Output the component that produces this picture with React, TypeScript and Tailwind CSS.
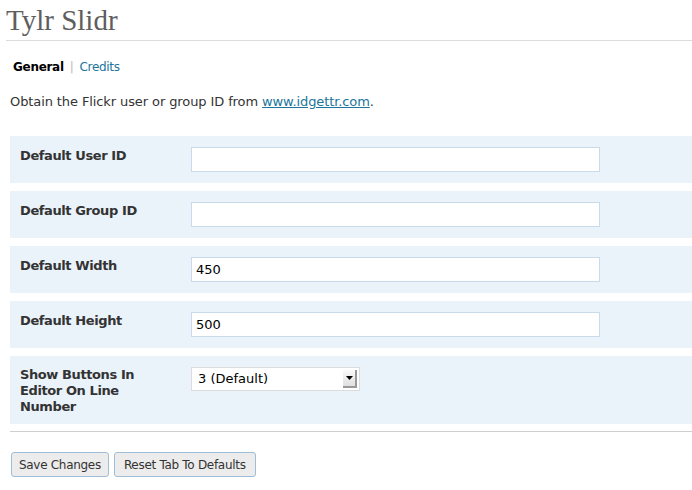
export default function App() {
  const rows = [
    { label: "Default User ID", value: "" },
    { label: "Default Group ID", value: "" },
    { label: "Default Width", value: "450" },
    { label: "Default Height", value: "500" },
  ];

  return (
    <div className="w-[692px] h-[490px] bg-white text-[#333] font-['DejaVu_Sans',sans-serif] text-[13px]">
      <div className="pl-[6px] pt-[3px]">
        <h2 className="font-['Liberation_Serif',serif] text-[29px] leading-[34px] text-[#5e5e5e]">
          Tylr Slidr
        </h2>
        <div className="mt-[3px] border-t border-[#dcdcdc]" />
      </div>

      <div className="pl-[13px] pt-[17px] flex items-center gap-[6px] leading-[18px] text-[12px] tracking-[-0.3px]">
        <span className="font-bold text-black">General</span>
        <span className="text-[#bbb]">|</span>
        <a className="text-[#21759b]">Credits</a>
      </div>

      <p className="pl-[10px] pt-[17px] leading-[18px] tracking-[-0.1px]">
        Obtain the Flickr user or group ID from{" "}
        <a className="text-[#21759b] underline">www.idgettr.com</a>.
      </p>

      <div className="ml-[10px] mt-[25px] flex flex-col gap-[8px]">
        {rows.map((r) => (
          <div key={r.label} className="flex bg-[#eaf2fa] py-[11px]">
            <div className="w-[181px] pl-[10px] pr-[30px] font-bold leading-[16px] pt-[1px] tracking-[-0.4px]">
              {r.label}
            </div>
            <div className="w-[409px] h-[25px] bg-white border border-[#c9dbea] px-[4px] flex items-center text-black">
              {r.value}
            </div>
          </div>
        ))}
        <div className="flex bg-[#eaf2fa] pt-[11px] pb-[9px]">
          <div className="w-[181px] pl-[10px] pr-[30px] font-bold leading-[16px] tracking-[-0.4px]">
            Show Buttons In Editor On Line Number
          </div>
          <div className="w-[169px] h-[24px] bg-white border border-[#dcdcdc] flex items-center justify-between pl-[6px] pr-[2px] text-black">
            <span>3 (Default)</span>
            <span className="w-[14px] h-[18px] bg-gradient-to-b from-[#fafafa] to-[#e0e0e0] border-r-2 border-b-2 border-[#999] flex items-center justify-center">
              <svg width="7" height="4" viewBox="0 0 7 4">
                <path d="M0 0h7L3.5 4z" fill="#000" />
              </svg>
            </span>
          </div>
        </div>
      </div>

      <div className="ml-[10px] mt-[7px] border-t border-[#cfcfcf]" />

      <div className="pl-[11px] pt-[20px] flex gap-[5px]">
        <button className="h-[25px] px-[7px] bg-[#ececec] border border-[#9fbdd6] rounded-[3px] text-[#333] text-[12px] tracking-[-0.3px] leading-none">
          Save Changes
        </button>
        <button className="h-[25px] px-[9px] bg-[#ececec] border border-[#9fbdd6] rounded-[3px] text-[#333] text-[12px] tracking-[-0.3px] leading-none">
          Reset Tab To Defaults
        </button>
      </div>
    </div>
  );
}
